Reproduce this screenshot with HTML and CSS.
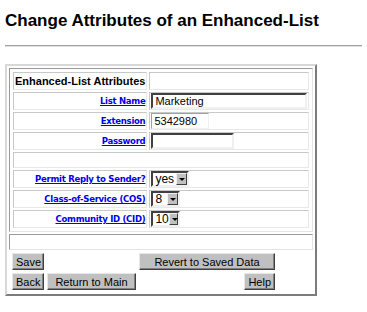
FILE: index.html
```html
<!DOCTYPE html>
<html>
<head>
<meta charset="utf-8">
<title>Change Attributes of an Enhanced-List</title>
<link rel="stylesheet" href="styles.css">
</head>
<body>
<h1 class="title">Change Attributes of an Enhanced-List</h1>
<hr class="rule">
<table class="frame">
  <tr><td class="frame-cell">
    <table class="attrs">
      <tr><td class="head">Enhanced-List Attributes</td><td class="blank"></td></tr>
      <tr><td class="label"><a href="#">List Name</a></td><td class="value"><input class="field name" type="text" value="Marketing"></td></tr>
      <tr><td class="label"><a href="#">Extension</a></td><td class="value"><input class="field ext" type="text" value="5342980"></td></tr>
      <tr><td class="label"><a href="#">Password</a></td><td class="value"><input class="field pass" type="password"></td></tr>
      <tr><td class="spacer" colspan="2"></td></tr>
      <tr><td class="label"><a href="#">Permit Reply to Sender?</a></td><td class="value"><span class="drop w-yes">yes<i class="arrow"></i></span></td></tr>
      <tr><td class="label"><a href="#">Class-of-Service (COS)</a></td><td class="value"><span class="drop w-num">8<i class="arrow"></i></span></td></tr>
      <tr><td class="label"><a href="#">Community ID (CID)</a></td><td class="value"><span class="drop w-num">10<i class="arrow"></i></span></td></tr>
    </table>
  </td></tr>
  <tr><td class="frame-cell gap"></td></tr>
  <tr><td class="actions-cell">
    <table class="actions">
      <tr><td><button class="btn small">Save</button></td><td></td><td><button class="btn revert">Revert to Saved Data</button></td></tr>
      <tr><td><button class="btn small">Back</button></td><td><button class="btn main">Return to Main</button></td><td class="right"><button class="btn">Help</button></td></tr>
    </table>
  </td></tr>
</table>
</body>
</html>
```

FILE: styles.css
```css
body{margin:6px 5px;background:#fff;color:#000;font-family:"Liberation Sans",Arial,sans-serif}
.title{font-size:17px;font-weight:bold;margin:5px 0 0 0;line-height:20px}
.rule{border:0;border-top:1px solid #a0a0a0;border-bottom:1px solid #e0e0e0;margin:14px -5px 0 0;height:0}

.frame{margin-top:17px;width:312px;border-collapse:separate;border-spacing:2px;
border:2px solid;border-color:#d8d8d8 #7c7c7c #7c7c7c #d8d8d8}
.frame-cell{border:1px solid;border-color:#9a9a9a #e4e4e4 #e4e4e4 #9a9a9a;padding:1px}
.gap{height:12px}
.actions-cell{padding:0}

.attrs{width:100%;border-collapse:separate;border-spacing:2px}
.attrs td{border:1px solid;border-color:#c8c8c8 #e8e8e8 #e8e8e8 #c8c8c8;padding:0 1px;height:16px;line-height:16px}
.head{font-size:11px;font-weight:bold;width:130px;white-space:nowrap}
.label{text-align:right;font-size:9.5px;font-weight:bold;font-family:"DejaVu Sans Condensed","DejaVu Sans",sans-serif;font-stretch:condensed;letter-spacing:-0.3px;white-space:nowrap}
.label a{color:#0000ee}
.spacer{height:14px!important}
.value{padding:0 0 0 1px!important}

.field{box-sizing:border-box;height:16px;border:2px solid;border-color:#404040 #f0f0f0 #f0f0f0 #404040;
font:11px "Liberation Sans",Arial,sans-serif;padding:0 2px;margin:0;display:block;background:#fff}
.name{width:156px}
.ext{width:58px;border-color:#a0a0a0 #f0f0f0 #f0f0f0 #a0a0a0;border-width:1px}
.pass{width:83px}

.drop{box-sizing:border-box;display:flex;align-items:center;justify-content:space-between;height:16px;
border:2px solid;border-color:#404040 #f0f0f0 #f0f0f0 #404040;font:12px/12px "Liberation Sans",Arial,sans-serif;padding-left:2px;background:#fff}
.w-yes{width:38px}
.w-num{width:29px}
.arrow{display:block;width:11px;height:12px;box-sizing:border-box;background:#c0c0c0;
border:1px solid;border-color:#f0f0f0 #404040 #404040 #f0f0f0;position:relative}
.arrow::after{content:"";position:absolute;left:2px;top:4px;border-left:3px solid transparent;border-right:3px solid transparent;border-top:3px solid #000}

.actions{border-collapse:separate;border-spacing:3px 3px;margin:-2px 0 -1px 0}
.actions td{padding:0}
.right{text-align:right}
.btn{font:11px "Liberation Sans",Arial,sans-serif;background:#c0c0c0;color:#000;height:17px;padding:0 3px;
border:1px solid;border-color:#e8e8e8 #404040 #404040 #e8e8e8;box-shadow:inset -1px -1px 0 #808080;margin:0;display:block}
.right .btn{margin-left:auto}
.small{width:32px}
.revert{width:136px}
.main{width:89px}
```
